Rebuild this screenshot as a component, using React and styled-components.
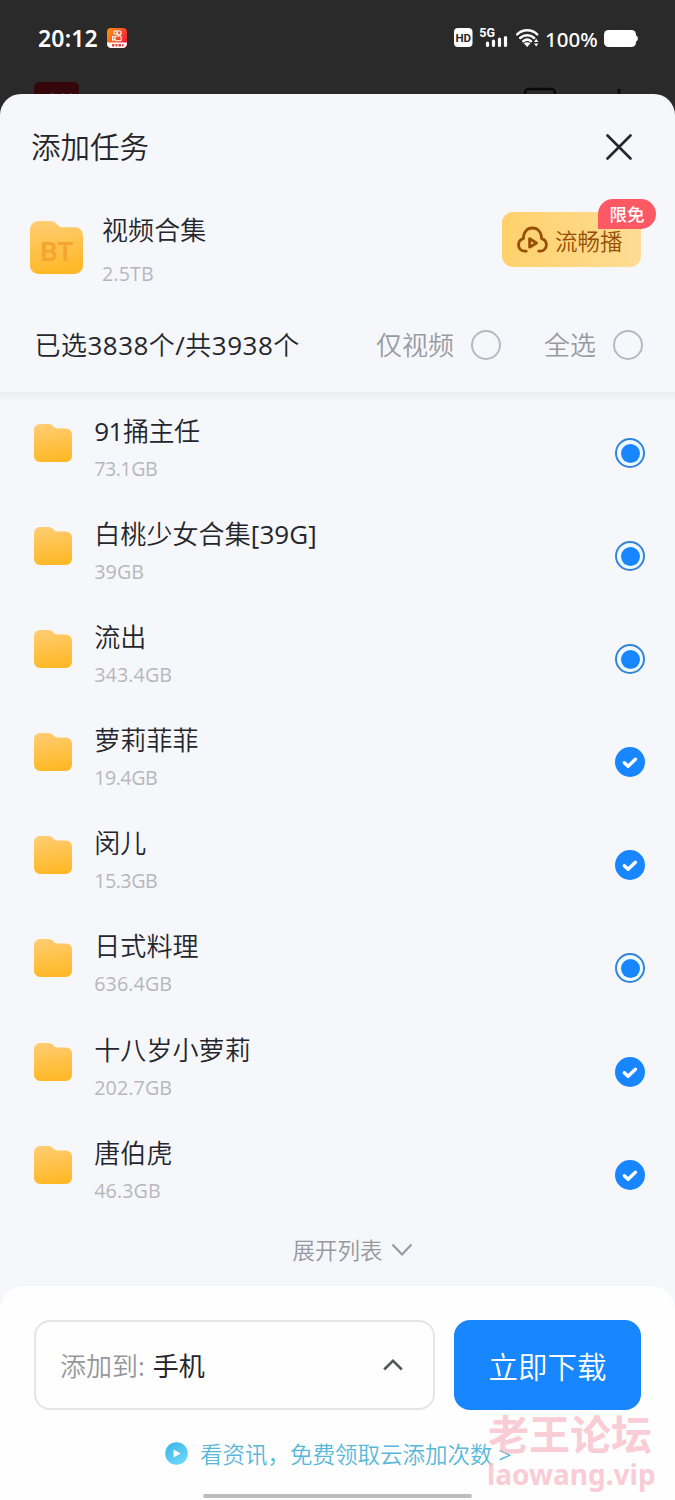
import React from "react";
import styled, { createGlobalStyle } from "styled-components";

const GlobalStyle = createGlobalStyle`
  * {
    box-sizing: border-box;
  }

  body {
    margin: 0;
    background: #2a2a2a;
    font-family: "Open Sans", "Noto Sans CJK SC", sans-serif;
    font-weight: 350;
    color: #25262b;
  }

  svg {
    display: block;
    flex: none;
  }

  button {
    border: 0;
    padding: 0;
    background: none;
    font: inherit;
    color: inherit;
  }
`;

const Screen = styled.div`
  position: relative;
  display: flex;
  flex-direction: column;
  width: 675px;
  height: 1500px;
  overflow: hidden;
  background: #2a2a2a;
`;

const StatusBar = styled.header`
  display: flex;
  align-items: center;
  height: 76px;
  padding: 0 37px 0 38px;
  color: #ffffff;
`;

const Clock = styled.span`
  width: 69px;
  font: 600 23px/32px "Noto Sans", sans-serif;
  letter-spacing: 0.2px;
  white-space: nowrap;
`;

const StatusIcons = styled.div`
  display: flex;
  align-items: center;
  margin-left: auto;
`;

const Battery = styled.span`
  margin: 2px 6px 0 6px;
  width: 53px;
  font: 500 20.5px/28px "Noto Sans", sans-serif;
  white-space: nowrap;
`;

const Backdrop = styled.div`
  display: flex;
  align-items: flex-end;
  height: 18px;
`;

const Sheet = styled.main`
  display: flex;
  flex-direction: column;
  flex: 1;
  border-radius: 21px 21px 0 0;
  background: #f6f7fb;
`;

const SheetHeader = styled.div`
  display: flex;
  align-items: center;
  justify-content: space-between;
  height: 106px;
  padding: 0 43px 0 31px;
`;

const Title = styled.h1`
  margin: 0;
  font-size: 29.5px;
  line-height: 44px;
  font-weight: inherit;
`;

const Task = styled.section`
  display: flex;
  height: 100px;
  padding: 0 34px 0 30px;
`;

const BigFolder = styled.div`
  padding-top: 21px;
`;

const TaskInfo = styled.div`
  flex: 1;
  padding: 10px 0 0 19px;
`;

const Name = styled.div`
  font-size: 26px;
  line-height: 40px;
  white-space: nowrap;
  letter-spacing: ${({ $tight }) => ($tight ? "-0.5px" : "0.1px")};
`;

const Latin = styled.span`
  font-weight: 400;
`;

const Size = styled.div`
  color: #b6b7bc;
  font-size: 19.7px;
  font-weight: 400;
  line-height: 28px;
  margin-top: ${({ $gap }) => $gap || 4}px;
  letter-spacing: ${({ $tight }) => ($tight ? "-0.5px" : "0.1px")};
`;

const PlayButton = styled.button`
  position: relative;
  display: flex;
  align-items: center;
  gap: 7px;
  width: 139px;
  height: 55px;
  margin-top: 12px;
  padding-left: 15px;
  border-radius: 11px;
  background: linear-gradient(90deg, #ffd16c, #fddc93);
  color: #964f05;
  font-size: 22.5px;
  line-height: 32px;
`;

const PlayLabel = styled.span`
  padding-top: 4px;
`;

const FreeBadge = styled.span`
  position: absolute;
  top: -13px;
  right: -15px;
  width: 58px;
  height: 30px;
  border-radius: 15px 15px 15px 0;
  background: #fd5965;
  color: #ffffff;
  font-size: 17.5px;
  line-height: 31px;
  font-weight: 500;
  text-align: center;
`;

const SelectBar = styled.section`
  display: flex;
  align-items: center;
  height: 92px;
  padding: 0 32px 2px 34.5px;
  font-size: 26px;
  line-height: 40px;
`;

const Selected = styled.span`
  flex: 1;
  white-space: nowrap;
  letter-spacing: 0.48px;
`;

const Filter = styled.label`
  display: flex;
  align-items: center;
  gap: 17px;
  margin-left: ${({ $first }) => ($first ? 0 : 43)}px;
  color: #999ba3;
`;

const EmptyCircle = styled.span`
  width: 30px;
  height: 30px;
  border: 2px solid #b7b9c0;
  border-radius: 50%;
`;

const List = styled.ul`
  height: 832px;
  margin: 0;
  padding: 9px 30px 0 33.6px;
  list-style: none;
  background: linear-gradient(#ebecef, #f6f7fb 10px);
`;

const Row = styled.li`
  display: flex;
  height: 103.1px;
`;

const FolderCell = styled.div`
  width: 60.6px;
  padding-top: 23px;
`;

const RowText = styled.div`
  flex: 1;
  padding-top: 10px;
`;

const MarkCell = styled.div`
  padding-top: 37px;
`;

const Partial = styled.div`
  display: grid;
  place-items: center;
  width: 30px;
  height: 30px;
  border: 2px solid #3484d8;
  border-radius: 50%;
  background: #effaff;

  &::after {
    content: "";
    width: 19px;
    height: 19px;
    border-radius: 50%;
    background: #1786ff;
  }
`;

const Expand = styled.button`
  display: flex;
  align-items: center;
  justify-content: center;
  gap: 8px;
  height: 62px;
  padding: 0 0 11px 30px;
  color: #96989f;
  font-size: 22.5px;
  line-height: 34px;

  span {
    padding-top: 2px;
  }
`;

const Footer = styled.footer`
  flex: 1;
  display: flex;
  flex-direction: column;
  border-radius: 24px 24px 0 0;
  background: #fefefe;
`;

const Actions = styled.div`
  display: flex;
  gap: 19px;
  padding: 34px 34px 0;
`;

const Target = styled.button`
  display: flex;
  align-items: center;
  width: 401px;
  height: 90px;
  padding: 0 30px 0 24px;
  border: 2px solid #e4e5ea;
  border-radius: 16px;
  font-size: 26px;
  text-align: left;

  > span {
    color: #96979b;
    margin-right: 8px;
  }

  b {
    font-weight: 400;
  }

  svg {
    margin-left: auto;
  }
`;

const Download = styled.button`
  width: 187px;
  height: 90px;
  border-radius: 16px;
  background: #1786ff;
  color: #ffffff;
  font-size: 29.5px;
`;

const News = styled.a`
  display: flex;
  align-items: center;
  height: 32px;
  margin: 27px 0 0 165px;
  color: #59b8d9;
  font-size: 22.5px;
  line-height: 32px;
  white-space: nowrap;

  svg {
    margin-right: 12px;
  }

  span {
    padding-top: 3px;
  }

  i {
    margin-left: 6px;
    padding-top: 3px;
    font-style: normal;
    font-weight: 400;
  }
`;

const HomeBar = styled.div`
  width: 269px;
  height: 4px;
  margin: 25px 0 0 203px;
  border-radius: 2px;
  background: #bdbdbd;
`;

const Watermark = styled.div`
  position: absolute;
  left: 488px;
  top: 1407px;
  color: rgba(247, 178, 194, 0.68);
  font-weight: 700;
  white-space: nowrap;

  div {
    font-size: 41px;
    line-height: 54px;
  }

  p {
    margin: -5px 0 0 -1px;
    font-family: "Noto Sans", sans-serif;
    font-size: 28px;
    line-height: 36px;
  }
`;

const files = [
  { name: "91捅主任", size: "73.1GB", partial: true },
  { name: "白桃少女合集[39G]", size: "39GB", partial: true },
  { name: "流出", size: "343.4GB", partial: true },
  { name: "萝莉菲菲", size: "19.4GB" },
  { name: "闵儿", size: "15.3GB" },
  { name: "日式料理", size: "636.4GB", partial: true },
  { name: "十八岁小萝莉", size: "202.7GB" },
  { name: "唐伯虎", size: "46.3GB" },
];

// latin runs need a heavier weight to sit evenly next to the CJK glyphs
const MixedText = ({ children }) =>
  children
    .split(/([\x21-\x7e]+)/)
    .map((part, index) =>
      index % 2 ? <Latin key={index}>{part}</Latin> : part
    );

const Folder = ({ size = 38, label }) => (
  <svg width={size} height={size} viewBox="0 0 38 38">
    <defs>
      <linearGradient id="folder" x1="0" y1="0" x2="0.15" y2="1">
        <stop offset="0" stopColor="#ffcd74" />
        <stop offset="1" stopColor="#ffb928" />
      </linearGradient>
    </defs>
    <path
      d="M6 0h8.5c2.4 0 3.8 1.2 5 2.5 1.1 1.2 2 1.9 4 1.9H32a6 6 0 0 1 6 6V32a6 6 0 0 1-6 6H6a6 6 0 0 1-6-6V6a6 6 0 0 1 6-6Z"
      fill="url(#folder)"
    />
    {label && (
      <text
        x="19"
        y="28.4"
        textAnchor="middle"
        fontFamily="Lato, sans-serif"
        fontSize="19"
        fontWeight="700"
        fill="#f5a430"
      >
        {label}
      </text>
    )}
  </svg>
);

const Check = () => (
  <svg width="30" height="30" viewBox="0 0 30 30" fill="none">
    <circle cx="15" cy="15" r="15" fill="#1786ff" />
    <path
      d="m9.3 15.7 3.8 3.6 7.3-7"
      stroke="#fff"
      strokeWidth="3.4"
      strokeLinecap="round"
      strokeLinejoin="round"
    />
  </svg>
);

const AppLogo = () => (
  <svg width="20" height="20" viewBox="0 0 20 20" fill="none">
    <defs>
      <linearGradient id="logo" x1="0" y1="0" x2="1" y2=".6">
        <stop stopColor="#ff970b" />
        <stop offset="1" stopColor="#ef2038" />
      </linearGradient>
    </defs>
    <rect width="20" height="20" rx="4" fill="url(#logo)" />
    <g stroke="#fff" strokeWidth="1.1">
      <circle cx="8.5" cy="4.5" r="1.7" />
      <circle cx="12.2" cy="4.8" r="2" />
      <rect x="8" y="8" width="6.2" height="4.8" rx="1.4" />
      <path d="m8 9-2.4-.5v3.8L8 11.5" />
    </g>
    <path d="M0 14.5h20v1a4.5 4.5 0 0 1-4.5 4.5h-11A4.5 4.5 0 0 1 0 15.5Z" fill="#fff" />
    <path d="M5 17.2h2.4m1 0h2m1 0h2.6m1 0h1.5" stroke="#e5433e" strokeWidth="2.4" />
  </svg>
);

const SystemIcons = () => (
  <svg width="86" height="24" viewBox="453 26 86 24" fill="none">
    <rect x="454" y="28" width="18.5" height="19" rx="4" fill="#fff" />
    <text
      x="463.2"
      y="41.8"
      textAnchor="middle"
      fontFamily="Roboto, sans-serif"
      fontSize="11.5"
      fontWeight="700"
      fill="#292929"
    >
      HD
    </text>
    <text
      x="479.3"
      y="37.4"
      fontFamily="Roboto, sans-serif"
      fontSize="12.5"
      fontWeight="700"
      fill="#fff"
    >
      5G
    </text>
    <path
      d="M487.5 43v2.4m6-4.2v4.2m6-6.2v6.2m6-7.8v7.8"
      stroke="#fff"
      strokeWidth="3.2"
      strokeLinecap="round"
    />
    <g stroke="#fff" strokeWidth="2.5" strokeLinecap="round">
      <path d="M517.2 34.3c5.7-5.3 14.3-5.3 20 0" />
      <path d="M520.2 38c4-3.7 10-3.7 14 0" />
      <path d="M523.3 41.3c2.3-2 5.4-2 7.7 0" />
    </g>
    <path d="m523.8 43.2 3.4 3.8 3.2-3.8c-2-1.3-4.6-1.3-6.6 0Z" fill="#fff" />
    <path d="m536.2 38.8 2.2 3.2H534ZM534 43.4h4.4l-2.2 3.2Z" fill="#fff" />
  </svg>
);

const App = () => (
  <>
    <GlobalStyle />
    <Screen>
      <StatusBar>
        <Clock>20:12</Clock>
        <AppLogo />
        <StatusIcons>
          <SystemIcons />
          <Battery>100%</Battery>
          <svg width="34" height="18" viewBox="0 0 34 18">
            <rect width="32" height="17" y="1" rx="4.5" fill="#fff" />
            <path d="M32 6.5c2.4.6 2.4 5.4 0 6Z" fill="#fff" />
          </svg>
        </StatusIcons>
      </StatusBar>
      <Backdrop>
        <svg width="675" height="18" viewBox="0 0 675 18" fill="none">
          <path d="M34 18v-7a5 5 0 0 1 5-5h35a5 5 0 0 1 5 5v7Z" fill="#35070b" />
          <path d="M51 17.5h3m8 0h2m6 0h2" stroke="#543236" />
          <path
            d="M525 21v-4a4 4 0 0 1 4-4h22a4 4 0 0 1 4 4v4M619 13v5"
            stroke="#090909"
            strokeWidth="2.5"
          />
        </svg>
      </Backdrop>

      <Sheet>
        <SheetHeader>
          <Title>添加任务</Title>
          <svg width="26" height="26" viewBox="0 0 26 26" fill="none">
            <path
              d="m1.5 1.5 23 23m0-23-23 23"
              stroke="#25262b"
              strokeWidth="2.6"
              strokeLinecap="round"
            />
          </svg>
        </SheetHeader>

        <Task>
          <BigFolder>
            <Folder size={53} label="BT" />
          </BigFolder>
          <TaskInfo>
            <Name>视频合集</Name>
            <Size $gap={10}>2.5TB</Size>
          </TaskInfo>
          <PlayButton>
            <svg width="31" height="27" viewBox="0 0 31 27" fill="none">
              <g
                stroke="currentColor"
                strokeWidth="2.8"
                strokeLinecap="round"
                strokeLinejoin="round"
              >
                <path d="M9.2 25.2H7.8C4.3 25.2 1.5 22.4 1.5 19c0-3 2-5.5 4.8-6.3C6.4 6 10.2 2 15.4 2s9 4 9.2 10.7c2.8.8 4.8 3.3 4.8 6.3 0 3.4-2.8 6.2-6.2 6.2h-1.5" />
                <path d="M12.6 12.8v8.4l7-4.2Z" />
              </g>
            </svg>
            <PlayLabel>流畅播</PlayLabel>
            <FreeBadge>限免</FreeBadge>
          </PlayButton>
        </Task>

        <SelectBar>
          <Selected>
            <MixedText>已选3838个/共3938个</MixedText>
          </Selected>
          <Filter $first>
            仅视频
            <EmptyCircle />
          </Filter>
          <Filter>
            全选
            <EmptyCircle />
          </Filter>
        </SelectBar>

        <List>
          {files.map((file) => (
            <Row key={file.name}>
              <FolderCell>
                <Folder />
              </FolderCell>
              <RowText>
                <Name $tight={file.name.includes("1")}>
                  <MixedText>{file.name}</MixedText>
                </Name>
                <Size $tight={file.size.includes("1")}>{file.size}</Size>
              </RowText>
              <MarkCell>{file.partial ? <Partial /> : <Check />}</MarkCell>
            </Row>
          ))}
        </List>

        <Expand>
          <span>展开列表</span>
          <svg width="22" height="14" viewBox="0 0 22 14" fill="none">
            <path d="m1.5 1.5 9.5 10 9.5-10" stroke="#96989f" strokeWidth="2" />
          </svg>
        </Expand>

        <Footer>
          <Actions>
            <Target>
              <span>
                <MixedText>添加到:</MixedText>
              </span>
              <b>手机</b>
              <svg width="20" height="12" viewBox="0 0 20 12" fill="none">
                <path d="m1.2 10.5 8.8-8.7 8.8 8.7" stroke="#55565a" strokeWidth="2.5" />
              </svg>
            </Target>
            <Download>立即下载</Download>
          </Actions>
          <News>
            <svg width="23" height="23" viewBox="0 0 23 23">
              <defs>
                <linearGradient id="play" x1="0" y1="0" x2="0.6" y2="1">
                  <stop stopColor="#39b3e5" />
                  <stop offset="1" stopColor="#6ad5fa" />
                </linearGradient>
              </defs>
              <circle cx="11.5" cy="11.5" r="11.3" fill="url(#play)" />
              <path d="M8.6 7.6v7.8l7-3.9Z" fill="#fff" />
            </svg>
            <span>看资讯，免费领取云添加次数</span>
            <i>&gt;</i>
          </News>
          <HomeBar />
        </Footer>
      </Sheet>

      <Watermark>
        <div>老王论坛</div>
        <p>laowang.vip</p>
      </Watermark>
    </Screen>
  </>
);

export default App;
